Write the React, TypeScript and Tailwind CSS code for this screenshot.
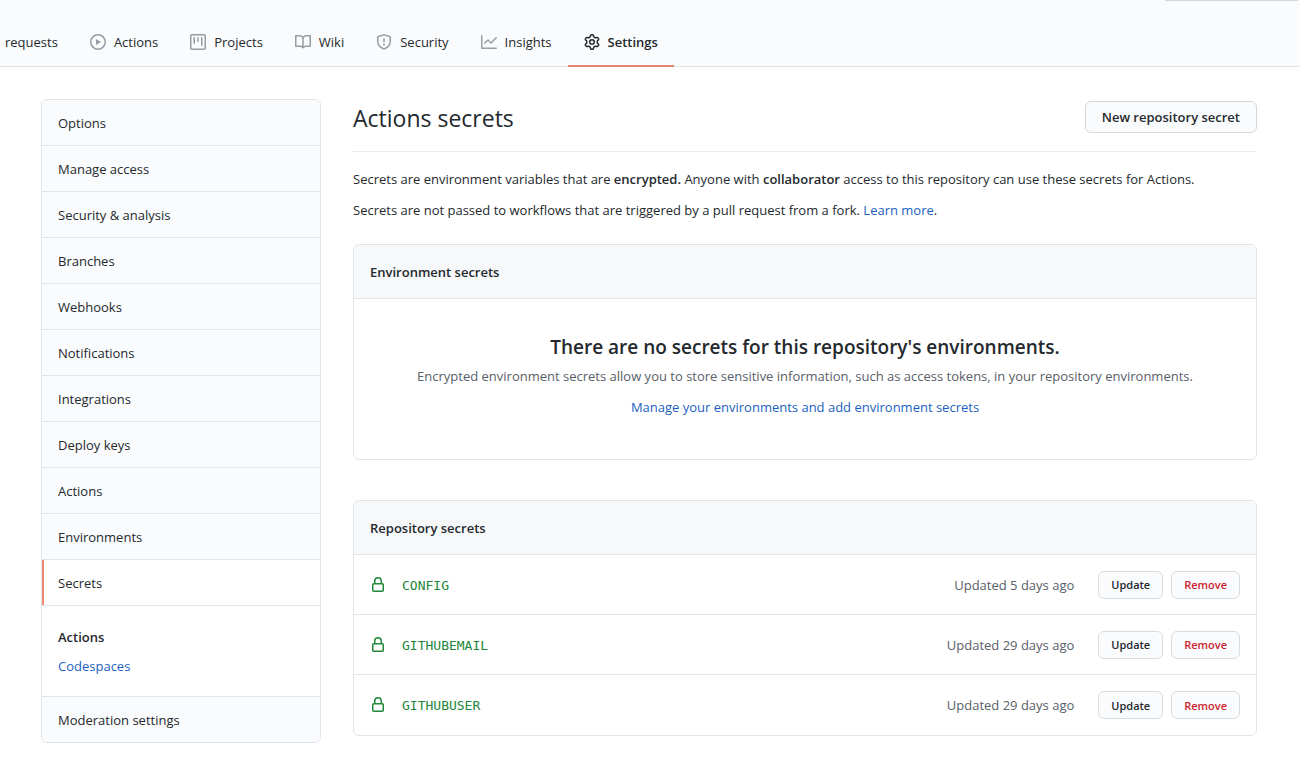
import type { ReactNode } from 'react';

const icons = {
  play: 'M1.5 8a6.5 6.5 0 1113 0 6.5 6.5 0 01-13 0zM8 0a8 8 0 100 16A8 8 0 008 0zM6.379 5.227A.25.25 0 006 5.442v5.117a.25.25 0 00.379.214l4.264-2.559a.25.25 0 000-.428L6.379 5.227z',
  project:
    'M1.75 0A1.75 1.75 0 000 1.75v12.5C0 15.216.784 16 1.75 16h12.5A1.75 1.75 0 0016 14.25V1.75A1.75 1.75 0 0014.25 0H1.75zM1.5 1.75a.25.25 0 01.25-.25h12.5a.25.25 0 01.25.25v12.5a.25.25 0 01-.25.25H1.75a.25.25 0 01-.25-.25V1.75zM11.75 3a.75.75 0 00-.75.75v7.5a.75.75 0 001.5 0v-7.5a.75.75 0 00-.75-.75zm-8.25.75a.75.75 0 011.5 0v5.5a.75.75 0 01-1.5 0v-5.5zM8 3a.75.75 0 00-.75.75v3.5a.75.75 0 001.5 0v-3.5A.75.75 0 008 3z',
  book: 'M0 1.75A.75.75 0 01.75 1h4.253c1.227 0 2.317.59 3 1.501A3.744 3.744 0 0111.006 1h4.245a.75.75 0 01.75.75v10.5a.75.75 0 01-.75.75h-4.507a2.25 2.25 0 00-1.591.659l-.622.621a.75.75 0 01-1.06 0l-.622-.621A2.25 2.25 0 005.258 13H.75a.75.75 0 01-.75-.75V1.75zm8.755 3a2.25 2.25 0 012.25-2.25H14.5v9h-3.757c-.71 0-1.4.201-1.992.572l.004-7.322zm-1.504 7.324l.004-5.073-.002-2.253A2.25 2.25 0 005.003 2.5H1.5v9h3.757a3.75 3.75 0 011.994.574z',
  shield:
    'M7.467.133a1.75 1.75 0 011.066 0l5.25 1.68A1.75 1.75 0 0115 3.48V7c0 1.566-.32 3.182-1.303 4.682-.983 1.498-2.585 2.813-5.032 3.855a1.7 1.7 0 01-1.33 0c-2.447-1.042-4.049-2.357-5.032-3.855C1.32 10.182 1 8.566 1 7V3.48a1.75 1.75 0 011.217-1.667l5.25-1.68zm.61 1.429a.25.25 0 00-.153 0l-5.25 1.68a.25.25 0 00-.174.238V7c0 1.358.275 2.666 1.057 3.86.784 1.194 2.121 2.34 4.366 3.297a.2.2 0 00.154 0c2.245-.956 3.582-2.104 4.366-3.298C13.225 9.666 13.5 8.36 13.5 7V3.48a.25.25 0 00-.174-.237l-5.25-1.68zM9 10.5a1 1 0 11-2 0 1 1 0 012 0zm-.25-5.75a.75.75 0 10-1.5 0v3a.75.75 0 001.5 0v-3z',
  graph:
    'M1.5 1.75a.75.75 0 00-1.5 0v12.5c0 .414.336.75.75.75h14.5a.75.75 0 000-1.5H1.5V1.75zm14.28 2.53a.75.75 0 00-1.06-1.06L10 7.94 7.53 5.47a.75.75 0 00-1.06 0L3.22 8.72a.75.75 0 001.06 1.06L7 7.06l2.47 2.47a.75.75 0 001.06 0l5.25-5.25z',
  gear: 'M7.429 1.525a6.593 6.593 0 011.142 0c.036.003.108.036.137.146l.289 1.105c.147.56.55.967.997 1.189.174.086.341.183.501.29.417.278.97.423 1.53.27l1.102-.303c.11-.03.175.016.195.046.219.31.41.641.573.989.014.031.022.11-.059.19l-.815.806c-.411.406-.562.957-.53 1.456a4.588 4.588 0 010 .582c-.032.499.119 1.05.53 1.456l.815.806c.08.08.073.159.059.19a6.494 6.494 0 01-.573.99c-.02.029-.086.074-.195.045l-1.103-.303c-.559-.153-1.112-.008-1.529.27-.16.107-.327.204-.5.29-.449.222-.851.628-.998 1.189l-.289 1.105c-.029.11-.101.143-.137.146a6.613 6.613 0 01-1.142 0c-.036-.003-.108-.037-.137-.146l-.289-1.105c-.147-.56-.55-.967-.997-1.189a4.502 4.502 0 01-.501-.29c-.417-.278-.97-.423-1.53-.27l-1.102.303c-.11.03-.175-.016-.195-.046a6.492 6.492 0 01-.573-.989c-.014-.031-.022-.11.059-.19l.815-.806c.411-.406.562-.957.53-1.456a4.587 4.587 0 010-.582c.032-.499-.119-1.05-.53-1.456l-.815-.806c-.08-.08-.073-.159-.059-.19a6.44 6.44 0 01.573-.99c.02-.029.086-.075.195-.045l1.103.303c.559.153 1.112.008 1.529-.27.16-.107.327-.204.5-.29.449-.222.851-.628.998-1.189l.289-1.105c.029-.11.101-.143.137-.146zM8 0c-.236 0-.47.01-.701.03-.743.065-1.29.615-1.458 1.261l-.29 1.106c-.017.066-.078.158-.211.224a5.994 5.994 0 00-.668.386c-.123.082-.233.09-.3.071L3.27 2.776c-.644-.177-1.392.02-1.82.63a7.977 7.977 0 00-.704 1.217c-.315.675-.111 1.422.363 1.891l.815.806c.05.048.098.147.088.294a6.084 6.084 0 000 .772c.01.147-.038.246-.088.294l-.815.806c-.474.469-.678 1.216-.363 1.891.2.428.436.835.704 1.218.428.609 1.176.806 1.82.63l1.103-.303c.066-.019.176-.011.299.071.213.143.436.272.668.386.133.066.194.158.212.224l.289 1.106c.169.646.715 1.196 1.458 1.26a8.094 8.094 0 001.402 0c.743-.064 1.29-.614 1.458-1.26l.29-1.106c.017-.066.078-.158.211-.224a5.98 5.98 0 00.668-.386c.123-.082.233-.09.3-.071l1.102.302c.644.177 1.392-.02 1.82-.63.268-.382.505-.789.704-1.217.315-.675.111-1.422-.364-1.891l-.814-.806c-.05-.048-.098-.147-.088-.294a6.1 6.1 0 000-.772c-.01-.147.039-.246.088-.294l.814-.806c.475-.469.679-1.216.364-1.891a7.992 7.992 0 00-.704-1.218c-.428-.609-1.176-.806-1.82-.63l-1.103.303c-.066.019-.176.011-.299-.071a5.991 5.991 0 00-.668-.386c-.133-.066-.194-.158-.212-.224L10.16 1.29C9.99.645 9.444.095 8.701.031A8.094 8.094 0 008 0zm1.5 8a1.5 1.5 0 11-3 0 1.5 1.5 0 013 0zM11 8a3 3 0 11-6 0 3 3 0 016 0z',
  lock: 'M4 4v2h-.25A1.75 1.75 0 002 7.75v5.5c0 .966.784 1.75 1.75 1.75h8.5A1.75 1.75 0 0014 13.25v-5.5A1.75 1.75 0 0012.25 6H12V4a4 4 0 10-8 0zm6.5 2V4a2.5 2.5 0 00-5 0v2h5zM12 7.5h.25a.25.25 0 01.25.25v5.5a.25.25 0 01-.25.25h-8.5a.25.25 0 01-.25-.25v-5.5a.25.25 0 01.25-.25H12z',
};

type IconName = keyof typeof icons;

function Icon({ name, className }: { name: IconName; className: string }) {
  return (
    <svg viewBox="0 0 16 16" aria-hidden="true" className={`size-4 shrink-0 ${className}`}>
      <path fillRule="evenodd" fill="currentColor" d={icons[name]} />
    </svg>
  );
}

const tabs: { label: string; icon?: IconName; active?: boolean }[] = [
  { label: 'requests' },
  { label: 'Actions', icon: 'play' },
  { label: 'Projects', icon: 'project' },
  { label: 'Wiki', icon: 'book' },
  { label: 'Security', icon: 'shield' },
  { label: 'Insights', icon: 'graph' },
  { label: 'Settings', icon: 'gear', active: true },
];

const menu = [
  'Options',
  'Manage access',
  'Security & analysis',
  'Branches',
  'Webhooks',
  'Notifications',
  'Integrations',
  'Deploy keys',
  'Actions',
  'Environments',
];

const secrets = [
  { name: 'CONFIG', updated: 'Updated 5 days ago' },
  { name: 'GITHUBEMAIL', updated: 'Updated 29 days ago' },
  { name: 'GITHUBUSER', updated: 'Updated 29 days ago' },
];

function Header() {
  return (
    <header className="border-b border-[#e1e4e8] bg-[#fafbfc]">
      <div className="mr-0.5 ml-auto h-px w-[133px] bg-[#d5d8da]" />
      <nav aria-label="Repository" className="-mb-px flex pt-[18px]">
        {tabs.map((tab) => (
          <a
            key={tab.label}
            href="#"
            aria-current={tab.active ? 'page' : undefined}
            className={`flex h-12 items-center gap-2 border-b-2 pr-4 first:pl-[5px] not-first:pl-4 ${
              tab.active ? 'border-[#e08872] font-semibold' : 'border-transparent'
            }`}
          >
            {tab.icon && <Icon name={tab.icon} className={tab.active ? 'text-[#24292e]' : 'text-[#959da5]'} />}
            <span className="pt-px">{tab.label}</span>
          </a>
        ))}
      </nav>
    </header>
  );
}

function Sidebar() {
  const item = 'flex h-[46px] items-center border-b border-[#e1e4e8] px-4 pt-0.5';
  return (
    <nav aria-label="Settings" className="w-[280px] shrink-0 overflow-hidden rounded-md border border-[#e1e4e8]">
      {menu.map((label) => (
        <a key={label} href="#" className={`${item} bg-[#fafbfc]`}>
          {label}
        </a>
      ))}
      <a href="#" aria-current="page" className={`${item} relative`}>
        <span className="absolute inset-y-0 left-0 w-0.5 bg-[#ec8b73]" />
        Secrets
      </a>
      <div className="flex flex-col gap-2 border-b border-[#e1e4e8] px-4 pt-[21px] pb-[19px]">
        <a href="#" className="leading-[21px] font-semibold">
          Actions
        </a>
        <a href="#" className="leading-[21px] text-[#1b5fc0]">
          Codespaces
        </a>
      </div>
      <a href="#" className="flex h-[45px] items-center bg-[#fafbfc] px-4 pt-0.5">
        Moderation settings
      </a>
    </nav>
  );
}

function Box({ title, children }: { title: string; children: ReactNode }) {
  return (
    <section className="mb-10 overflow-hidden rounded-md border border-[#e1e4e8]">
      <h3 className="flex h-[54px] items-center border-b border-[#e1e4e8] bg-[#f6f8fa] px-4 pt-0.5 font-semibold">
        {title}
      </h3>
      {children}
    </section>
  );
}

function SmallButton({ label, danger }: { label: string; danger?: boolean }) {
  return (
    <button
      type="button"
      className={`h-7 rounded-md border border-[#d9dcdf] bg-[#fafbfc] px-3 pt-0.5 text-[11px] font-semibold ${
        danger ? 'text-[#cb2431]' : ''
      }`}
    >
      {label}
    </button>
  );
}

export default function App() {
  return (
    <div className="min-h-screen bg-white font-['Open_Sans',sans-serif] text-[13px] text-[#24292e]">
      <Header />
      <div className="flex items-start gap-8 pt-8 pr-[43px] pl-[41px]">
        <Sidebar />
        <main className="min-w-0 flex-1">
          <div className="mb-[17px] flex items-center justify-between border-b border-[#eaecef] pt-0.5 pb-[18px]">
            <h2 className="pt-0.5 text-[23px] leading-[30px]">Actions secrets</h2>
            <button
              type="button"
              className="h-8 rounded-md border border-[#d5d8da] bg-[#fafbfc] px-4 pt-0.5 font-semibold"
            >
              New repository secret
            </button>
          </div>
          <p className="mb-2.5 leading-[21px]">
            Secrets are environment variables that are <strong className="font-semibold">encrypted.</strong> Anyone with{' '}
            <strong className="font-semibold">collaborator</strong> access to this repository can use these secrets for
            Actions.
          </p>
          <p className="mb-[23px] leading-[21px]">
            Secrets are not passed to workflows that are triggered by a pull request from a fork.{' '}
            <a href="#" className="text-[#1b5fc0]">
              Learn more
            </a>
            .
          </p>
          <Box title="Environment secrets">
            <div className="px-8 pt-8 pb-[41px] text-center">
              <h4 className="mb-[3px] text-[19px] leading-8 font-semibold">
                There are no secrets for this repository's environments.
              </h4>
              <p className="mb-2.5 leading-[21px] text-[#586069]">
                Encrypted environment secrets allow you to store sensitive information, such as access tokens, in your
                repository environments.
              </p>
              <a href="#" className="leading-[21px] text-[#1b5fc0]">
                Manage your environments and add environment secrets
              </a>
            </div>
          </Box>
          <Box title="Repository secrets">
            <ul className="divide-y divide-[#e1e4e8]">
              {secrets.map((secret) => (
                <li key={secret.name} className="flex h-[60px] items-center px-4">
                  <Icon name="lock" className="text-[#22863a]" />
                  <code className="ml-4 pt-0.5 font-['DejaVu_Sans_Mono',monospace] text-[13px] text-[#22863a]">
                    {secret.name}
                  </code>
                  <span className="mr-6 ml-auto pt-0.5 text-[#586069]">{secret.updated}</span>
                  <span className="flex gap-2">
                    <SmallButton label="Update" />
                    <SmallButton label="Remove" danger />
                  </span>
                </li>
              ))}
            </ul>
          </Box>
        </main>
      </div>
    </div>
  );
}
